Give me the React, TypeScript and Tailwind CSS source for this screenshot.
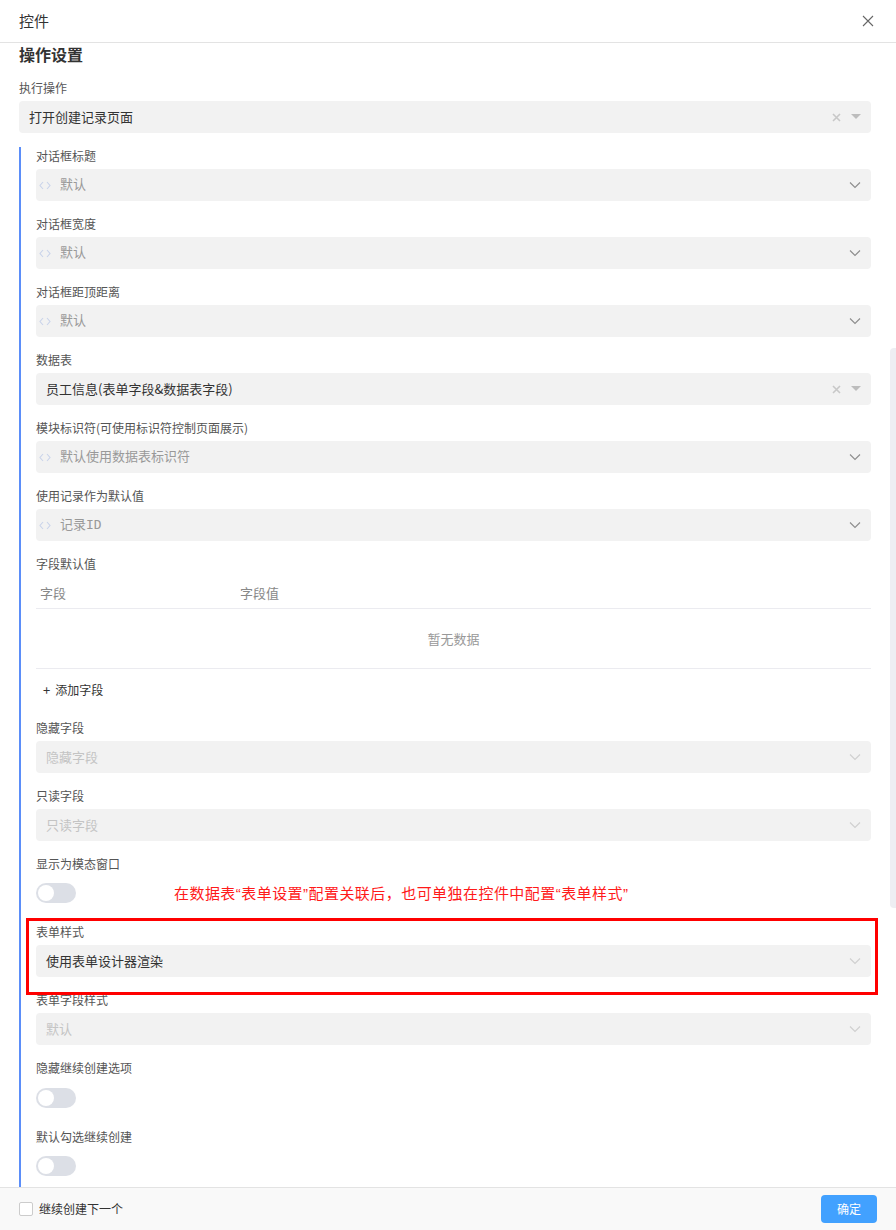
import React from "react";

const font = { fontFamily: '"Noto Sans CJK SC", "Noto Sans", sans-serif' };

function Chevron({ light }: { light?: boolean }) {
  return (
    <svg width="12" height="8" viewBox="0 0 12 8" className="shrink-0">
      <path d="M1 1.5 L6 6.5 L11 1.5" fill="none" stroke={light ? "#cfcfcf" : "#8c8c8c"} strokeWidth="1.1" />
    </svg>
  );
}

function ClearCaret() {
  return (
    <div className="flex items-center gap-[10px]">
      <svg width="9" height="9" viewBox="0 0 9 9">
        <path d="M1 1 L8 8 M8 1 L1 8" stroke="#c8c8c8" strokeWidth="1.6" />
      </svg>
      <svg width="10" height="6" viewBox="0 0 10 6">
        <path d="M0 0 L10 0 L5 5 Z" fill="#bdbdbd" />
      </svg>
    </div>
  );
}

function CodeIcon() {
  return (
    <svg width="12" height="9" viewBox="0 0 12 9" className="shrink-0">
      <path d="M4 1 L1 4.5 L4 8 M8 1 L11 4.5 L8 8" fill="none" stroke="#c9d3ea" strokeWidth="1.1" />
    </svg>
  );
}

function Label({ children }: { children: React.ReactNode }) {
  return <div className="h-[18px] leading-[18px] text-[12px] text-[#555]">{children}</div>;
}

function SelectBox({ value, clear }: { value: string; clear?: boolean }) {
  return (
    <div className="mt-1 h-8 rounded bg-[#f2f2f2] flex items-center justify-between pl-[10px] pr-[10px]">
      <span className="text-[13px] text-[#333]">{value}</span>
      {clear ? <ClearCaret /> : <Chevron light />}
    </div>
  );
}

function Placeholder({ text }: { text: string }) {
  return (
    <div className="mt-1 h-8 rounded bg-[#f2f2f2] flex items-center justify-between pl-[10px] pr-[10px]">
      <span className="text-[13px] text-[#c4c4c4]">{text}</span>
      <Chevron light />
    </div>
  );
}

function CodeInput({ text }: { text: string }) {
  return (
    <div className="mt-1 h-8 rounded bg-[#f2f2f2] flex items-center justify-between pl-[3px] pr-[10px]">
      <div className="flex items-center gap-[9px]">
        <CodeIcon />
        <span
          className="text-[13px] text-[#999]"
          style={{ fontFamily: '"DejaVu Sans Mono", "Noto Sans CJK SC", monospace' }}
        >
          {text}
        </span>
      </div>
      <Chevron />
    </div>
  );
}

function Toggle() {
  return (
    <div className="w-10 h-5 rounded-full bg-[#dcdfe6] flex items-center px-[2px]">
      <div className="w-4 h-4 rounded-full bg-white" />
    </div>
  );
}

export default function App() {
  return (
    <div className="w-[896px] h-[1230px] flex flex-col bg-white overflow-hidden relative" style={font}>
      <div className="h-[43px] shrink-0 border-b border-[#e3e3e3] flex items-center justify-between pl-[19px] pr-[22px]">
        <span className="text-[15px] text-[#333]">控件</span>
        <svg width="12" height="12" viewBox="0 0 12 12">
          <path d="M1 1 L11 11 M11 1 L1 11" stroke="#666" strokeWidth="1.1" />
        </svg>
      </div>

      <div className="flex-1 overflow-hidden pl-[19px] pr-[25px]">
        <div className="h-[22px] leading-[22px] text-[16px] font-bold text-[#333]">操作设置</div>

        <div className="mt-[14px]">
          <Label>执行操作</Label>
          <SelectBox value="打开创建记录页面" clear />
        </div>

        <div className="mt-[14px] border-l-2 border-[#5b8ef9] pl-[15px]">
          <div className="mb-[14px]">
            <Label>对话框标题</Label>
            <CodeInput text="默认" />
          </div>
          <div className="mb-[14px]">
            <Label>对话框宽度</Label>
            <CodeInput text="默认" />
          </div>
          <div className="mb-[14px]">
            <Label>对话框距顶距离</Label>
            <CodeInput text="默认" />
          </div>
          <div className="mb-[14px]">
            <Label>数据表</Label>
            <SelectBox value="员工信息(表单字段&数据表字段)" clear />
          </div>
          <div className="mb-[14px]">
            <Label>模块标识符(可使用标识符控制页面展示)</Label>
            <CodeInput text="默认使用数据表标识符" />
          </div>
          <div className="mb-[14px]">
            <Label>使用记录作为默认值</Label>
            <CodeInput text="记录ID" />
          </div>

          <div>
            <Label>字段默认值</Label>
            <div className="mt-[4px] h-8 border-b border-[#ebebf0] flex items-center text-[13px] text-[#888]">
              <span className="pl-1 w-[204px]">字段</span>
              <span>字段值</span>
            </div>
            <div className="h-[60px] border-b border-[#ebebf0] flex items-center justify-center text-[13px] text-[#999]">
              暂无数据
            </div>
            <div className="mt-[7px] mb-[15px] h-7 flex items-center pl-[7px] text-[12px] text-[#333] gap-[5px]">
              <span className="text-[13px]">+</span>
              <span>添加字段</span>
            </div>
          </div>

          <div className="mb-[14px]">
            <Label>隐藏字段</Label>
            <Placeholder text="隐藏字段" />
          </div>
          <div className="mb-[14px]">
            <Label>只读字段</Label>
            <Placeholder text="只读字段" />
          </div>
          <div className="mb-[20px]">
            <Label>显示为模态窗口</Label>
            <div className="mt-[10px]">
              <Toggle />
            </div>
          </div>
          <div className="mb-[14px]">
            <Label>表单样式</Label>
            <SelectBox value="使用表单设计器渲染" />
          </div>
          <div className="mb-[14px]">
            <Label>表单字段样式</Label>
            <Placeholder text="默认" />
          </div>
          <div className="mb-[20px]">
            <Label>隐藏继续创建选项</Label>
            <div className="mt-[11px]">
              <Toggle />
            </div>
          </div>
          <div className="pb-[20px]">
            <Label>默认勾选继续创建</Label>
            <div className="mt-[10px]">
              <Toggle />
            </div>
          </div>
        </div>
      </div>

      <div className="h-[43px] shrink-0 border-t border-[#e3e3e3] bg-[#f9f9f9] flex items-center justify-between pl-[19px] pr-[19px]">
        <div className="flex items-center gap-[6px]">
          <div className="w-[14px] h-[14px] border border-[#ccc] rounded-[2px] bg-white" />
          <span className="text-[12px] text-[#333]">继续创建下一个</span>
        </div>
        <div className="w-[56px] h-[28px] rounded bg-[#42a1ff] text-white text-[12px] flex items-center justify-center">
          确定
        </div>
      </div>

      {/* scrollbar */}
      <div className="absolute right-0 top-[348px] w-[6px] h-[560px] rounded-l bg-[#eeeef3]" />

      {/* annotation overlay */}
      <div
        className="absolute left-[174px] top-[883px] text-[15px] leading-[22px] tracking-[0.45px] text-[#ff1a1a]"
        style={{ fontFamily: '"Liberation Sans", "Noto Sans CJK SC", sans-serif' }}
      >
        在数据表“表单设置”配置关联后，也可单独在控件中配置“表单样式”
      </div>
      <div className="absolute left-[26px] top-[918px] w-[852px] h-[77px] border-[3px] border-[#ff0000]" />
    </div>
  );
}
